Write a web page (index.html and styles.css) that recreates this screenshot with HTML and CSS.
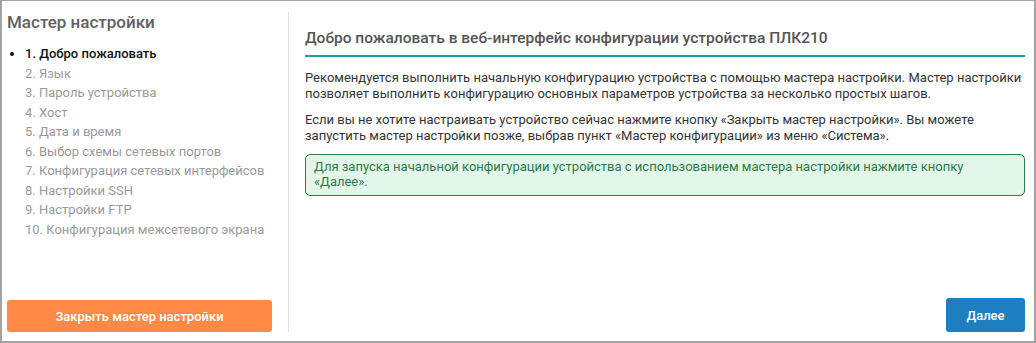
FILE: index.html
```html
<!DOCTYPE html>
<html lang="ru">
<head>
  <meta charset="UTF-8">
  <meta name="viewport" content="width=device-width, initial-scale=1.0">
  <title>Мастер настройки</title>
  <link rel="stylesheet" href="styles.css">
</head>
<body>
  <div class="wizard">
    <!-- список шагов -->
    <div class="steps">
      <h1 class="steps-title">Мастер настройки</h1>
      <ul class="steps-list">
        <li class="active">1. Добро пожаловать</li>
        <li>2. Язык</li>
        <li>3. Пароль устройства</li>
        <li>4. Хост</li>
        <li>5. Дата и время</li>
        <li>6. Выбор схемы сетевых портов</li>
        <li>7. Конфигурация сетевых интерфейсов</li>
        <li>8. Настройки SSH</li>
        <li>9. Настройки FTP</li>
        <li>10. Конфигурация межсетевого экрана</li>
      </ul>
      <button class="close-btn">Закрыть мастер настройки</button>
    </div>

    <!-- содержимое шага -->
    <div class="content">
      <h2 class="content-title">Добро пожаловать в веб-интерфейс конфигурации устройства ПЛК210</h2>
      <p>Рекомендуется выполнить начальную конфигурацию устройства с помощью мастера настройки. Мастер настройки позволяет выполнить конфигурацию основных параметров устройства за несколько простых шагов.</p>
      <p>Если вы не хотите настраивать устройство сейчас нажмите кнопку «Закрыть мастер настройки». Вы можете запустить мастер настройки позже, выбрав пункт «Мастер конфигурации» из меню «Система».</p>
      <div class="alert">Для запуска начальной конфигурации устройства с использованием мастера настройки нажмите кнопку «Далее».</div>
      <div class="content-footer">
        <button class="next-btn">Далее</button>
      </div>
    </div>
  </div>
</body>
</html>
```

FILE: styles.css
```css
body {
  margin: 0;
  font-family: Roboto, "Liberation Sans", Arial, sans-serif;
  font-size: 13px;
  color: #333;
  background: #fff;
}
.wizard {
  box-sizing: border-box;
  width: 1036px;
  height: 343px;
  border: 2px solid #a3a3a3;
  border-top-width: 1px;
  padding: 11px 9px 9px 5px;
  display: flex;
}
.steps {
  width: 265px;
  padding-right: 16px;
  border-right: 1px solid #dedede;
  display: flex;
  flex-direction: column;
}
.steps-title {
  margin: 0;
  font-size: 17px;
  font-weight: 500;
  color: #616161;
  line-height: 20px;
}
.steps-list {
  list-style: none;
  margin: 12px 0 0;
  padding: 0 0 0 18px;
  line-height: 19.5px;
  color: #9a9a9a;
  flex: 1;
}
.steps-list li.active {
  list-style: disc;
  color: #111;
  font-weight: 500;
}
.close-btn {
  height: 32px;
  border: none;
  border-radius: 3px;
  background-color: #ff8a48;
  color: #fff;
  font-family: inherit;
  font-size: 13px;
  font-weight: 500;
  cursor: pointer;
}
.close-btn:hover {
  background-color: #f27a36;
}
.content {
  flex: 1;
  padding-left: 16px;
  display: flex;
  flex-direction: column;
}
.content-title {
  margin: 17px 0 0;
  padding-bottom: 8px;
  border-bottom: 2px solid #17a0a0;
  font-size: 15.5px;
  font-weight: 500;
  color: #555;
  line-height: 18px;
}
.content p {
  margin: 13px 0 0;
  line-height: 15.5px;
}
.content p + p {
  margin-top: 11px;
}
.alert {
  margin-top: 11px;
  padding: 5px 8px 6px 8px;
  border: 1px solid #2f7d4c;
  border-radius: 5px;
  background-color: #e3f6ea;
  color: #2d7a48;
  line-height: 14.5px;
}
.content-footer {
  flex: 1;
  display: flex;
  justify-content: flex-end;
  align-items: flex-end;
}
.next-btn {
  width: 79px;
  height: 34px;
  border: none;
  border-radius: 3px;
  background-color: #1f7ec0;
  color: #fff;
  font-family: inherit;
  font-size: 13px;
  font-weight: 500;
  cursor: pointer;
}
.next-btn:hover {
  background-color: #186aa3;
}
```
